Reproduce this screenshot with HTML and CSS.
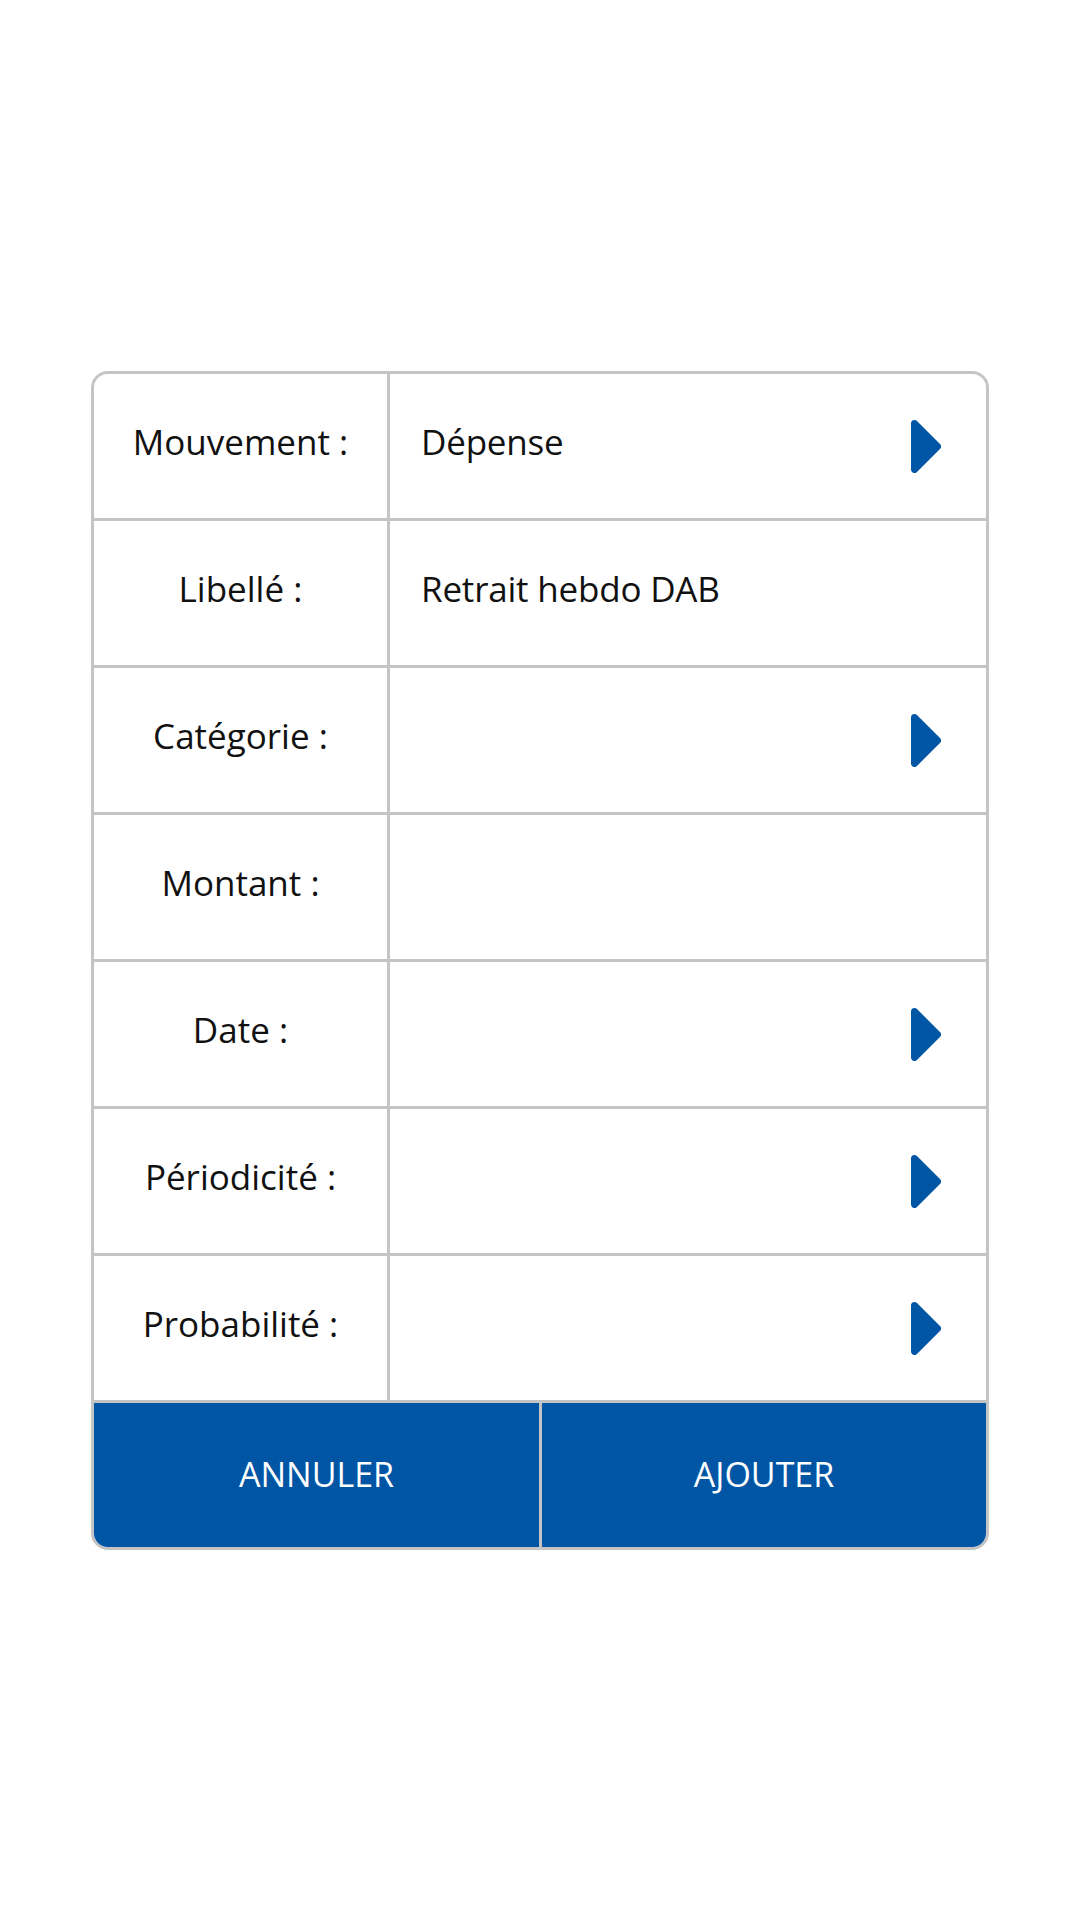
FILE: index.html
```html
<!DOCTYPE html>
<html lang="fr">
<head>
<meta charset="utf-8">
<link rel="stylesheet" href="styles.css">
</head>
<body>
<div class="page">
  <div class="card">
    <div class="row">
      <div class="label">Mouvement :</div>
      <div class="value"><span class="text">Dépense</span><svg class="arrow" viewBox="0 0 30 53" width="30" height="53"><path d="M3.5 3.5 L26.5 26.5 L3.5 49.5 Z"/></svg></div>
    </div>
    <div class="row">
      <div class="label">Libellé :</div>
      <div class="value"><span class="text">Retrait hebdo DAB</span></div>
    </div>
    <div class="row">
      <div class="label">Catégorie :</div>
      <div class="value"><span class="text"></span><svg class="arrow" viewBox="0 0 30 53" width="30" height="53"><path d="M3.5 3.5 L26.5 26.5 L3.5 49.5 Z"/></svg></div>
    </div>
    <div class="row">
      <div class="label">Montant :</div>
      <div class="value"><span class="text"></span></div>
    </div>
    <div class="row">
      <div class="label">Date :</div>
      <div class="value"><span class="text"></span><svg class="arrow" viewBox="0 0 30 53" width="30" height="53"><path d="M3.5 3.5 L26.5 26.5 L3.5 49.5 Z"/></svg></div>
    </div>
    <div class="row">
      <div class="label">Périodicité :</div>
      <div class="value"><span class="text"></span><svg class="arrow" viewBox="0 0 30 53" width="30" height="53"><path d="M3.5 3.5 L26.5 26.5 L3.5 49.5 Z"/></svg></div>
    </div>
    <div class="row">
      <div class="label">Probabilité :</div>
      <div class="value"><span class="text"></span><svg class="arrow" viewBox="0 0 30 53" width="30" height="53"><path d="M3.5 3.5 L26.5 26.5 L3.5 49.5 Z"/></svg></div>
    </div>
    <div class="buttons">
      <div class="btn">ANNULER</div>
      <div class="btn">AJOUTER</div>
    </div>
  </div>
</div>
</body>
</html>
```
FILE: styles.css
```css
html, body {
  margin: 0;
  padding: 0;
  background: #ffffff;
}
body {
  width: 1080px;
  height: 1920px;
  font-family: "Open Sans", "Noto Sans", sans-serif;
  color: #111111;
}
.page {
  padding-top: 371px;
  padding-left: 91px;
}
.card {
  width: 892px;
  border: 3px solid #c4c4c4;
  border-radius: 17px;
  overflow: hidden;
  background: #ffffff;
}
.row {
  display: grid;
  grid-template-columns: 293px 596px;
  column-gap: 3px;
  background: #c4c4c4;
  border-bottom: 3px solid #c4c4c4;
}
.label, .value {
  height: 144px;
  background: #ffffff;
  display: flex;
  align-items: center;
  font-size: 35px;
  box-sizing: border-box;
}
.label {
  justify-content: center;
  padding-bottom: 9px;
}
.value {
  justify-content: space-between;
  padding-left: 31px;
  padding-right: 45px;
}
.text {
  padding-bottom: 9px;
  letter-spacing: -0.2px;
}
.arrow {
  display: block;
}
.arrow path {
  fill: #0055a5;
  stroke: #0055a5;
  stroke-width: 7;
  stroke-linejoin: round;
}
.buttons {
  display: grid;
  grid-template-columns: 445px 444px;
  column-gap: 3px;
  background: #c4c4c4;
}
.btn {
  height: 144px;
  background: #0055a5;
  color: #ffffff;
  font-size: 34px;
  padding-bottom: 3px;
  box-sizing: border-box;
  display: flex;
  align-items: center;
  justify-content: center;
}
```
